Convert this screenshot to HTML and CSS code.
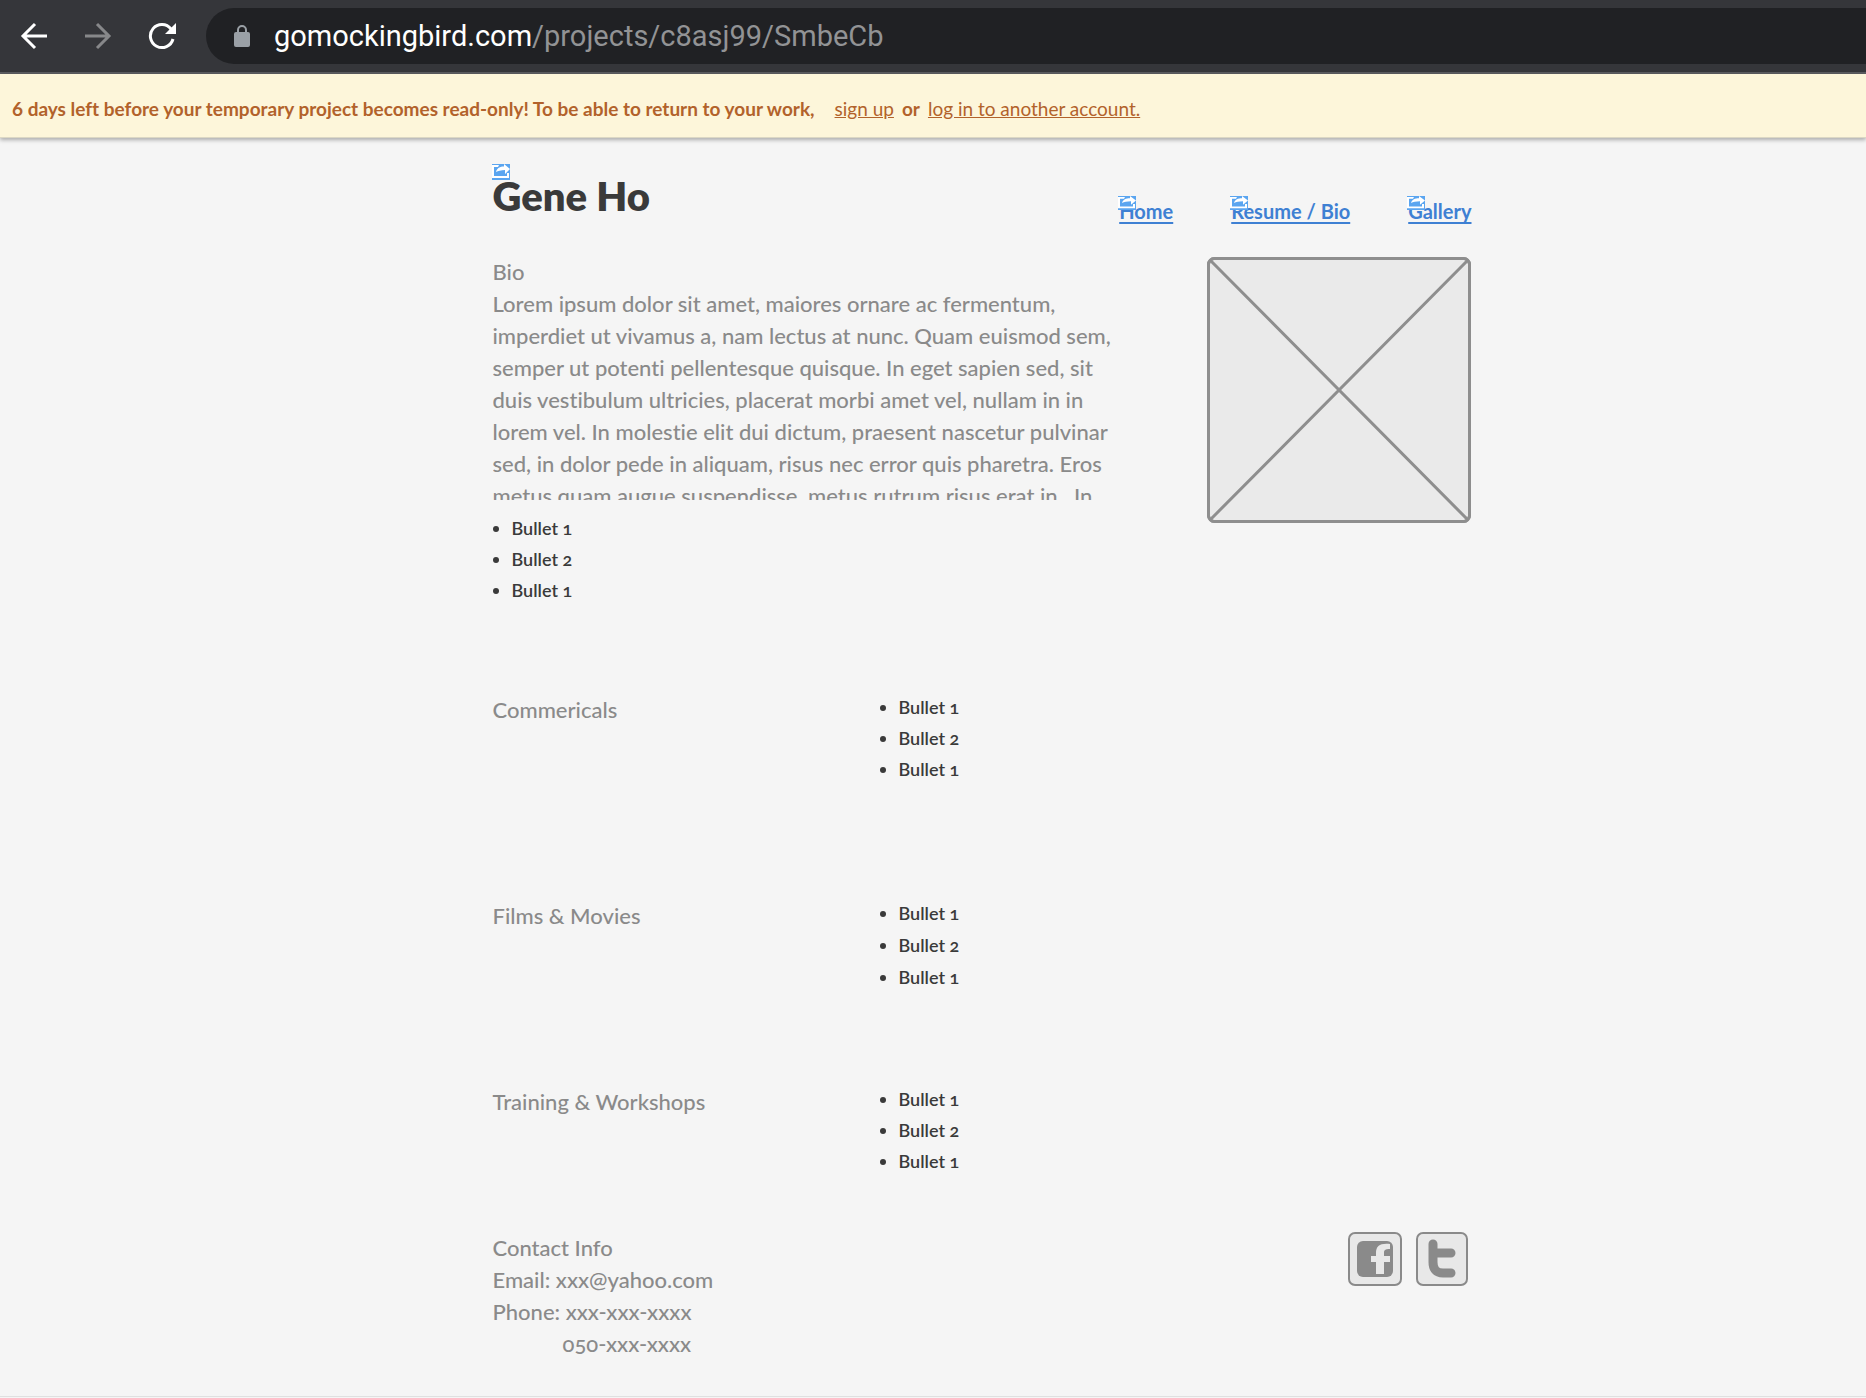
FILE: index.html
```html
<!DOCTYPE html>
<html lang="en">
<head>
<meta charset="utf-8">
<title>Gene Ho</title>
<link rel="stylesheet" href="styles.css">
</head>
<body>
<svg width="0" height="0" class="defs" aria-hidden="true">
  <symbol id="link-mark" viewBox="0 0 18 16" preserveAspectRatio="none">
    <rect width="18" height="16" fill="#5aa5f0"/>
    <path d="M0 1h7L6 3H2v9h13V9h2v5H0z" fill="#fff"/>
    <path d="M4 8C5 4 8 2.500 12 2.500V0l6 5-5 5V6C9 6 6 7 4 8z" fill="#fff"/>
  </symbol>
</svg>

<header class="browser">
  <button class="tool" aria-label="Back"><svg width="28" height="28" viewBox="0 0 28 28"><path d="M27 14H3M15 2L3 14l12 12" fill="none" stroke="#fff" stroke-width="3"/></svg></button>
  <button class="tool" aria-label="Forward" disabled><svg width="28" height="28" viewBox="0 0 28 28"><path d="M1 14h24M13 2l12 12-12 12" fill="none" stroke="#87888a" stroke-width="3"/></svg></button>
  <button class="tool" aria-label="Reload"><svg width="28" height="28" viewBox="0 0 28 28"><path d="M23 7A11.500 11.500 0 1 0 25 17" fill="none" stroke="#fff" stroke-width="3"/><path d="M28 1v11H17z" fill="#fff"/></svg></button>
  <div class="address">
    <svg width="16" height="22" viewBox="0 0 16 22" aria-hidden="true"><rect y="7" width="16" height="15" rx="2" fill="#9aa0a6"/><path d="M4 8V5a4 4 0 0 1 8 0v3" fill="none" stroke="#9aa0a6" stroke-width="2"/></svg>
    <span class="url"><span class="host">gomockingbird.com</span>/projects/c8asj99/SmbeCb</span>
  </div>
</header>

<div class="banner">
  <strong class="notice">6 days left before your temporary project becomes read-only! To be able to return to your work,</strong>
  <a href="#signup">sign up</a>
  <strong>or</strong>
  <a href="#login">log in to another account.</a>
</div>

<main class="page">
  <div class="masthead">
    <h1 class="marked">Gene Ho<svg class="mark"><use href="#link-mark"/></svg></h1>
    <nav class="nav">
      <a class="marked" href="#home">Home<svg class="mark"><use href="#link-mark"/></svg></a>
      <a class="marked" href="#resume">Resume / Bio<svg class="mark"><use href="#link-mark"/></svg></a>
      <a class="marked" href="#gallery">Gallery<svg class="mark"><use href="#link-mark"/></svg></a>
    </nav>
  </div>

  <section class="intro">
    <div>
      <div class="bio">
        <h2>Bio</h2>
        <p>Lorem ipsum dolor sit amet, maiores ornare ac fermentum,<br>imperdiet ut vivamus a, nam lectus at nunc. Quam euismod sem,<br>semper ut potenti pellentesque quisque. In eget sapien sed, sit<br>duis vestibulum ultricies, placerat morbi amet vel, nullam in in<br>lorem vel. In molestie elit dui dictum, praesent nascetur pulvinar<br>sed, in dolor pede in aliquam, risus nec error quis pharetra. Eros<br>metus quam augue suspendisse, metus rutrum risus erat in.&nbsp; In</p>
      </div>
      <ul class="bullets"><li>Bullet 1</li><li>Bullet 2</li><li>Bullet 1</li></ul>
    </div>
    <svg class="photo" viewBox="0 0 264 266" role="img" aria-label="Photo placeholder"><rect x="1.500" y="1.500" width="261" height="263" rx="6" fill="#eaeaea"/><path d="M3 3l258 260M261 3L3 263"/><rect x="1.500" y="1.500" width="261" height="263" rx="6" fill="none"/></svg>
  </section>

  <section class="credits commercials">
    <h2>Commericals</h2>
    <ul class="bullets"><li>Bullet 1</li><li>Bullet 2</li><li>Bullet 1</li></ul>
  </section>
  <section class="credits films">
    <h2>Films &amp; Movies</h2>
    <ul class="bullets loose"><li>Bullet 1</li><li>Bullet 2</li><li>Bullet 1</li></ul>
  </section>
  <section class="credits training">
    <h2>Training &amp; Workshops</h2>
    <ul class="bullets"><li>Bullet 1</li><li>Bullet 2</li><li>Bullet 1</li></ul>
  </section>

  <footer class="contact">
    <div>
      <h2>Contact Info</h2>
      <p>Email: xxx@yahoo.com</p>
      <p>Phone: xxx-xxx-xxxx</p>
      <p class="second-phone">050-xxx-xxxx</p>
    </div>
    <div class="social">
      <a href="#facebook" aria-label="Facebook"><svg width="54" height="54" viewBox="0 0 54 54"><rect x="1" y="1" width="52" height="52" rx="6" fill="#e8e8e8" stroke="#8a8a8a" stroke-width="2"/><rect x="9" y="9" width="36" height="36" rx="6" fill="#8a8a8a"/><path d="M28 42V30h-5v-6h5v-3c0-7 4-10 14-9v5c-5 0-6 1-6 4v3h6v6h-6v12z" fill="#e8e8e8"/></svg></a>
      <a href="#twitter" aria-label="Twitter"><svg width="52" height="54" viewBox="0 0 52 54"><rect x="1" y="1" width="50" height="52" rx="6" fill="#e8e8e8" stroke="#8a8a8a" stroke-width="2"/><path d="M17 12v18c0 7 3 11 10 11h8M17 21h18" fill="none" stroke="#8a8a8a" stroke-width="9" stroke-linecap="round"/></svg></a>
    </div>
  </footer>
</main>
</body>
</html>
```
FILE: styles.css
```css
* { box-sizing: border-box; }
body {
  margin: 0;
  background: #f5f5f5;
  color: #8a8a8a;
  font-family: Lato, "Noto Sans", sans-serif;
  font-size: 22px;
  font-weight: 500;
  font-variant-ligatures: none;
  font-variant-numeric: oldstyle-nums;
  line-height: 32px;
}
h1, h2, p, ul { margin: 0; padding: 0; }
h2 { font-size: 22px; font-weight: 500; }
.defs { position: absolute; }

.browser {
  display: flex;
  align-items: center;
  height: 74px;
  padding-left: 20px;
  background: #35363a;
  border-bottom: 2px solid #5b5c60;
}
.tool {
  display: flex;
  width: 28px;
  margin-right: 36px;
  padding: 0;
  border: 0;
  background: none;
}
.tool:nth-of-type(3) { margin-right: 30px; }
.address {
  display: flex;
  flex: 1;
  align-items: center;
  gap: 24px;
  height: 56px;
  padding-left: 28px;
  border-radius: 28px 0 0 28px;
  background: #202124;
}
.url { color: #929395; font: 29px Roboto, sans-serif; white-space: nowrap; }
.host { color: #fff; }

.banner {
  display: flex;
  align-items: center;
  gap: 8px;
  height: 64px;
  padding: 6px 12px 0;
  border-bottom: 1px solid #dcd8c4;
  background: #fdf6da;
  box-shadow: 0 2px 4px rgba(0, 0, 0, .3);
  color: #b2622b;
  font-size: 19px;
  font-variant-numeric: normal;
  white-space: nowrap;
}
.banner a { color: inherit; font-weight: 400; }
.notice { margin-right: 12px; }

.page {
  display: grid;
  grid-template-columns: minmax(0, 979px);
  justify-content: center;
  padding: 0 0 36px 98px;
  border-bottom: 1px solid #e0e0e0;
}
.masthead {
  display: flex;
  justify-content: space-between;
  align-items: flex-end;
  height: 85px;
}
h1 { height: 59px; color: #3a3a3a; font-size: 40px; font-weight: 800; line-height: 64px; }
.nav { display: flex; gap: 58px; font-size: 20px; font-weight: 700; line-height: 24px; }
.nav a { color: #3e80d3; text-decoration-thickness: 2px; text-underline-offset: 3px; }
.marked { position: relative; }
.mark { position: absolute; top: 0; left: -1px; width: 18px; height: 16px; }
.nav .mark { top: -3px; height: 14px; }

.intro { display: flex; justify-content: space-between; margin-top: 33px; }
.bio { height: 244px; overflow: hidden; white-space: nowrap; }
.photo { width: 264px; height: 266px; margin: 1px 1px 0 0; stroke: #8e8e8e; stroke-width: 3; }
.bullets {
  display: grid;
  gap: 7px;
  padding-left: 19px;
  color: #3a3a3a;
  font-size: 18px;
  font-weight: 600;
  line-height: 24px;
}
.bio + .bullets { margin-top: 16px; }
.loose { gap: 8px; }
.credits { display: grid; grid-template-columns: 387px 1fr; }
.credits .bullets { padding-top: 1px; }
.commercials { margin-top: 92px; }
.films { margin-top: 119px; }
.training { margin-top: 97px; }
.contact { display: flex; justify-content: space-between; margin-top: 59px; }
.second-phone { padding-left: 70px; }
.social { display: flex; gap: 14px; margin-right: 4px; }
.social a, .social svg { display: block; }
```
